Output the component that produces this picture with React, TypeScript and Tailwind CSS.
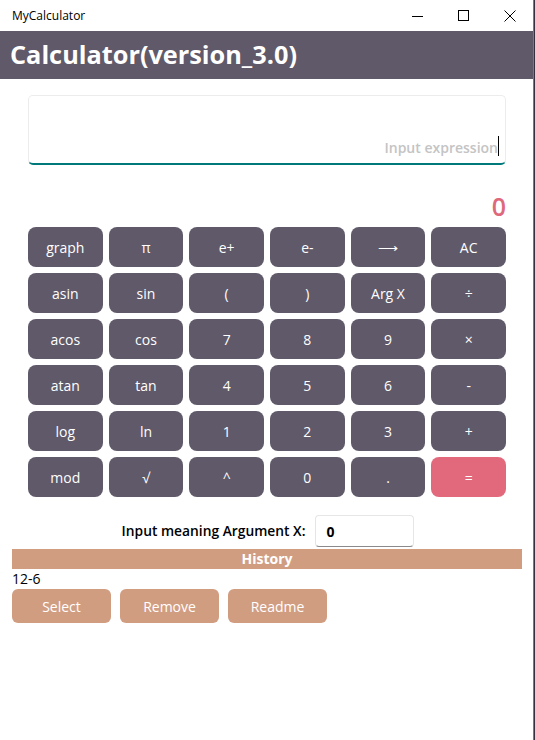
const rows: string[][] = [
  ["graph", "π", "e+", "e-", "⟶", "AC"],
  ["asin", "sin", "(", ")", "Arg X", "÷"],
  ["acos", "cos", "7", "8", "9", "×"],
  ["atan", "tan", "4", "5", "6", "-"],
  ["log", "ln", "1", "2", "3", "+"],
  ["mod", "√", "^", "0", ".", "="],
];

export default function App() {
  return (
    <div className="flex h-[740px] w-[535px] bg-white font-['Open_Sans',sans-serif]">
      <div className="flex w-[533px] flex-col">
        {/* title bar */}
        <div className="flex h-[31px] items-center justify-between pl-[12px]">
          <span className="text-[12px] text-black">MyCalculator</span>
          <div className="flex items-center">
            <div className="flex h-[31px] w-[46px] items-center justify-center">
              <svg width="12" height="12" viewBox="0 0 12 12">
                <path d="M0 6.5h11" stroke="#000" strokeWidth="1" />
              </svg>
            </div>
            <div className="flex h-[31px] w-[46px] items-center justify-center">
              <svg width="12" height="12" viewBox="0 0 12 12">
                <rect x="0.5" y="0.5" width="10" height="10" fill="none" stroke="#000" strokeWidth="1" />
              </svg>
            </div>
            <div className="flex h-[31px] w-[46px] items-center justify-center">
              <svg width="12" height="12" viewBox="0 0 12 12">
                <path d="M0.5 0.5l11 11M11.5 0.5l-11 11" stroke="#000" strokeWidth="1" />
              </svg>
            </div>
          </div>
        </div>

        {/* header */}
        <div className="flex h-[48px] items-center bg-[#5f5969] pl-[10px]">
          <h1 className="text-[25.3px] font-bold leading-none text-white">Calculator(version_3.0)</h1>
        </div>

        <div className="flex flex-col pl-[28px] pr-[27px] pt-[16px]">
          <div className="flex h-[70px] items-end justify-end rounded-[5px] border border-[#ececec] border-b-[2px] border-b-[#00797b] pb-[5px] pr-[6px]">
            <span className="text-[14px] font-semibold text-[#c4c4c4]">Input expression</span>
            <span className="mb-[2px] h-[20px] w-px bg-black" />
          </div>

          <div className="mt-[26px] flex justify-end">
            <span className="text-[25px] font-semibold leading-[30px] text-[#e0687b]">0</span>
          </div>

          <div className="mt-[6px] grid grid-cols-6 gap-[6px]">
            {rows.flat().map((k, i) => (
              <button
                key={i}
                className={`flex h-[40px] items-center justify-center rounded-[8px] text-[14px] text-white ${
                  k === "=" ? "bg-[#e2697c]" : "bg-[#5f5969]"
                }`}
              >
                {k}
              </button>
            ))}
          </div>
        </div>

        <div className="mt-[18px] flex items-center justify-center gap-[10px] pl-[3px]">
          <span className="text-[13.8px] font-semibold text-black">Input meaning Argument X:</span>
          <div className="flex h-[32px] w-[99px] items-center rounded-[4px] border border-[#e6e6e6] border-b-[#8a8a8a] pl-[10px]">
            <span className="text-[14px] font-bold text-black">0</span>
          </div>
        </div>

        <div className="mx-[12px] mt-[2px] mr-[11px] flex h-[20px] items-center justify-center bg-[#d19d81]">
          <span className="text-[14px] font-bold leading-none text-white">History</span>
        </div>

        <div className="px-[12px] text-[14px] leading-[20px] text-black">12-6</div>

        <div className="flex gap-[9px] px-[12px]">
          {["Select", "Remove", "Readme"].map((b) => (
            <button
              key={b}
              className="flex h-[34px] w-[99px] items-center justify-center rounded-[6px] bg-[#d19d81] text-[14px] text-white"
            >
              {b}
            </button>
          ))}
        </div>
      </div>
      <div className="h-full w-px bg-[#7a7a7a]" />
      <div className="h-full w-px bg-[#3a3040]" />
    </div>
  );
}
